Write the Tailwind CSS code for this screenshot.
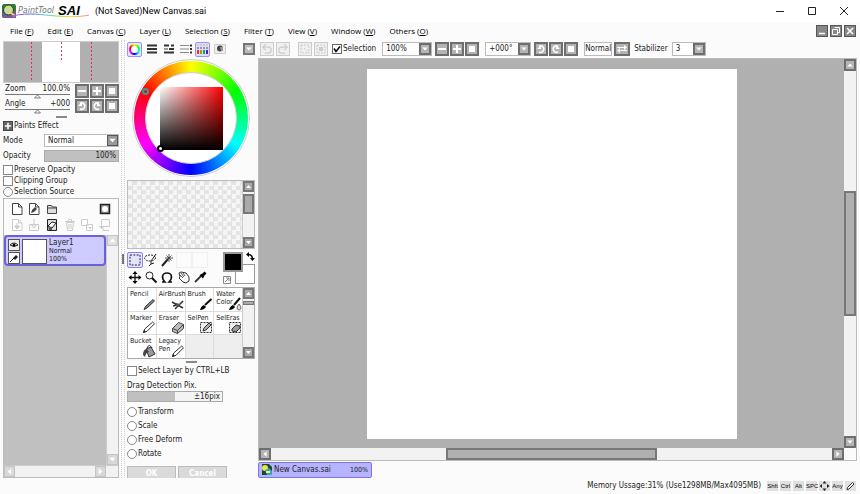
<!DOCTYPE html>
<html lang="en">
<head>
    <meta charset="UTF-8">
    <meta name="viewport" content="width=device-width, initial-scale=1.0">
    <title>(Not Saved)New Canvas.sai</title>
    <script src="https://cdn.jsdelivr.net/npm/@tailwindcss/browser@4"></script>
</head>
<body class="flex flex-col h-screen overflow-hidden bg-[#fbfbfb] text-[#222] text-[8px] leading-[10px] font-['DejaVu_Sans_Condensed','DejaVu_Sans',sans-serif]">

    <!-- Shared glyphs, all on a 10x10 grid unless noted -->
    <svg class="hidden">
        <symbol id="minus" viewBox="0 0 10 10"><path d="M1 5h8" stroke="currentColor" stroke-width="2"/></symbol>
        <symbol id="plus" viewBox="0 0 10 10"><path d="M1 5h8M5 1v8" stroke="currentColor" stroke-width="2"/></symbol>
        <symbol id="square" viewBox="0 0 10 10"><path d="M2 2h6v6H2z" fill="currentColor"/></symbol>
        <symbol id="ccw" viewBox="0 0 10 10"><path d="M3 2.2A3.3 3.3 0 1 1 3 8" fill="none" stroke="currentColor" stroke-width="1.6"/><path d="M1 5h4V1z" fill="currentColor"/></symbol>
        <symbol id="cw" viewBox="0 0 10 10"><path d="M7 2.2A3.3 3.3 0 1 0 7 8" fill="none" stroke="currentColor" stroke-width="1.6"/><path d="M9 5H5V1z" fill="currentColor"/></symbol>
        <symbol id="up" viewBox="0 0 10 10"><path d="M1.5 7L5 3l3.500 4z" fill="currentColor"/></symbol>
        <symbol id="down" viewBox="0 0 10 10"><path d="M1.500 3L5 7l3.500-4z" fill="currentColor"/></symbol>
        <symbol id="left" viewBox="0 0 10 10"><path d="M7 1.500L3 5l4 3.500z" fill="currentColor"/></symbol>
        <symbol id="right" viewBox="0 0 10 10"><path d="M3 1.500L7 5 3 8.500z" fill="currentColor"/></symbol>
        <symbol id="undo" viewBox="0 0 10 10"><path d="M3 8.500h3a2.500 2.500 0 0 0 0-5H2M4 1L1.500 3.500 4 6" fill="none" stroke="currentColor"/></symbol>
        <symbol id="redo" viewBox="0 0 10 10"><path d="M7 8.500H4a2.500 2.500 0 0 1 0-5h4M6 1l2.500 2.500L6 6" fill="none" stroke="currentColor"/></symbol>
        <symbol id="swap" viewBox="0 0 10 10"><path d="M0 3.500h8M10 6.500H2" stroke="currentColor"/><path d="M7 1l3 2.500L7 6zM3 4L0 6.500 3 9z" fill="currentColor"/></symbol>
        <symbol id="pen" viewBox="0 0 14 14"><path d="M1.500 12.500l1.200-3.500 8-7 1.800 1.800-7.500 7.500z" fill="#fff" stroke="#333"/><path d="M1 13l1-3 2 2z" fill="#222"/></symbol>
        <symbol id="sheet" viewBox="0 0 14 14"><path d="M2.500 1.500h6l3.500 3.500v7.500H2.500zM8.500 1.500V5H12" fill="#fff" stroke="currentColor"/></symbol>
    </svg>

    <!-- Title bar -->
    <header class="flex shrink-0 items-center h-[22px] bg-white text-black text-[9px] font-[Roboto,sans-serif]">
        <div class="relative flex items-center w-[90px] h-full">
            <svg class="ml-0.5 size-3.5" viewBox="0 0 14 14">
                <rect width="14" height="14" rx="2" fill="#387a35"/>
                <path d="M0 9l6 1 8-3v7H1z" fill="#7c55a4"/>
                <circle cx="6.500" cy="6" r="5" fill="#cbd99a" stroke="#1c421c"/>
                <path d="M8 8l5 4" stroke="#e8d84a" stroke-width="2"/>
            </svg>
            <span class="ml-0.5 text-[8px] italic text-[#777] font-['DejaVu_Sans',sans-serif]">PaintTool</span>
            <b class="ml-1 text-[13px] italic font-['Liberation_Sans',sans-serif]">SAI</b>
            <svg class="absolute left-3 top-3 w-[78px] h-[6px]" viewBox="0 0 78 6" fill="none">
                <defs>
                    <linearGradient id="rainbow">
                        <stop offset="0" stop-color="#a05ae0"/><stop offset=".25" stop-color="#5a6cf0"/>
                        <stop offset=".45" stop-color="#4bd0d8"/><stop offset=".6" stop-color="#8be04c"/>
                        <stop offset=".75" stop-color="#ffd23c"/><stop offset="1" stop-color="#ff7b8c"/>
                    </linearGradient>
                </defs>
                <path d="M0 4C18 0 30 3 44 4S68 5 77 3" stroke="url(#rainbow)"/>
            </svg>
        </div>
        <h1 class="ml-[5px]">(Not Saved)New Canvas.sai</h1>
        <div class="flex ml-auto">
            <button class="flex justify-center w-8" aria-label="Minimize"><svg class="size-2" viewBox="0 0 8 8"><path d="M0 4.500h8" stroke="#222"/></svg></button>
            <button class="flex justify-center w-8" aria-label="Maximize"><svg class="size-2" viewBox="0 0 8 8"><path d="M.5.5h7v7h-7z" fill="none" stroke="#222"/></svg></button>
            <button class="flex justify-center w-8" aria-label="Close"><svg class="size-2" viewBox="0 0 8 8"><path d="M0 0l8 8M8 0L0 8" stroke="#222"/></svg></button>
        </div>
    </header>

    <!-- Menu bar -->
    <nav class="flex shrink-0 items-center h-[18px] pl-2.5 pr-1 text-[8px] font-['Open_Sans',sans-serif] text-black">
        <div class="flex gap-3.5">
            <a href="#">File (<u>F</u>)</a>
            <a href="#">Edit (<u>E</u>)</a>
            <a href="#">Canvas (<u>C</u>)</a>
            <a href="#">Layer (<u>L</u>)</a>
            <a href="#">Selection (<u>S</u>)</a>
            <a href="#">Filter (<u>T</u>)</a>
            <a href="#">View (<u>V</u>)</a>
            <a href="#">Window (<u>W</u>)</a>
            <a href="#">Others (<u>O</u>)</a>
        </div>
        <div class="flex gap-0.5 ml-auto text-white">
            <button class="size-3 border border-[#555] bg-[#888]" aria-label="Minimize canvas"><svg viewBox="0 0 10 10"><path d="M2 7.500h6" stroke="currentColor" stroke-width="1.500"/></svg></button>
            <button class="size-3 border border-[#555] bg-[#888]" aria-label="Restore canvas"><svg viewBox="0 0 10 10"><path d="M3.500 1.500h5v5h-2M1.500 3.500h5v5h-5z" fill="none" stroke="currentColor"/></svg></button>
            <button class="size-3 border border-[#555] bg-[#888]" aria-label="Close canvas"><svg viewBox="0 0 10 10"><path d="M2 2l6 6M8 2L2 8" stroke="currentColor" stroke-width="1.500"/></svg></button>
        </div>
    </nav>

    <main class="flex flex-1 min-h-0">

        <!-- Navigator and layers -->
        <aside class="flex flex-col shrink-0 w-[122px] pl-[3px] pr-0.5 border-r border-dotted border-[#ccc]">
            <div class="flex justify-center shrink-0 h-[42px] mt-px border border-[#ccc] bg-[#b0b0b0]">
                <div class="flex-1 flex justify-center pl-4"><i class="w-px bg-[repeating-linear-gradient(#f02860_0_2px,transparent_2px_4px)]"></i></div>
                <div class="w-[38px] h-full flex justify-center bg-white"><i class="w-px h-5 bg-[repeating-linear-gradient(#f02860_0_2px,transparent_2px_4px)]"></i></div>
                <div class="flex-1 flex justify-center pr-4"><i class="w-px bg-[repeating-linear-gradient(#f02860_0_2px,transparent_2px_4px)]"></i></div>
            </div>

            <div class="flex shrink-0 gap-px mt-px">
                <div class="flex-1 pl-0.5 pr-1">
                    <div class="flex justify-between"><span>Zoom</span><span>100.0%</span></div>
                    <svg class="block w-full h-1 overflow-visible" viewBox="0 0 66 4"><path d="M0 .5h66" stroke="#777"/><path d="M30 4l3-3 3 3z" fill="#fff" stroke="#777"/></svg>
                </div>
                <button class="size-3.5 border-2 border-[#6e6e6e] bg-[#b4b4b4] text-white" aria-label="Zoom out"><svg class="block size-2.5"><use href="#minus"/></svg></button>
                <button class="size-3.5 border-2 border-[#6e6e6e] bg-[#b4b4b4] text-white" aria-label="Zoom in"><svg class="block size-2.5"><use href="#plus"/></svg></button>
                <button class="size-3.5 border-2 border-[#6e6e6e] bg-[#b4b4b4] text-white" aria-label="Reset zoom"><svg class="block size-2.5"><use href="#square"/></svg></button>
            </div>
            <div class="flex shrink-0 gap-px mt-px">
                <div class="flex-1 pl-0.5 pr-1">
                    <div class="flex justify-between"><span>Angle</span><span>+000</span></div>
                    <svg class="block w-full h-1 overflow-visible" viewBox="0 0 66 4"><path d="M0 .5h66" stroke="#777"/><path d="M30 4l3-3 3 3z" fill="#fff" stroke="#777"/></svg>
                </div>
                <button class="size-3.5 border-2 border-[#6e6e6e] bg-[#b4b4b4] text-white" aria-label="Rotate left"><svg class="block size-2.5"><use href="#ccw"/></svg></button>
                <button class="size-3.5 border-2 border-[#6e6e6e] bg-[#b4b4b4] text-white" aria-label="Rotate right"><svg class="block size-2.5"><use href="#cw"/></svg></button>
                <button class="size-3.5 border-2 border-[#6e6e6e] bg-[#b4b4b4] text-white" aria-label="Reset angle"><svg class="block size-2.5"><use href="#square"/></svg></button>
            </div>

            <div class="shrink-0 self-center w-[11px] h-0.5 mt-[3px] bg-[#888]"></div>

            <div class="flex shrink-0 items-center gap-px mt-[3px] h-[10px]">
                <button class="size-[10px] border border-[#444] bg-[#666] text-white" aria-label="Expand paints effect"><svg class="size-2"><use href="#plus"/></svg></button>
                <span>Paints Effect</span>
            </div>
            <div class="flex shrink-0 items-center justify-between mt-[3px] h-[13px]">
                <label for="mode">Mode</label>
                <div class="relative w-[75px] h-[13px] border border-[#bbb] bg-white">
                    <select id="mode" class="block w-full h-full pl-[3px] appearance-none"><option>Normal</option></select>
                    <svg class="absolute right-0 top-0 size-[11px] border border-[#555] bg-[#999] text-white pointer-events-none"><use href="#down"/></svg>
                </div>
            </div>
            <div class="flex shrink-0 items-center justify-between mt-[3px] h-3">
                <span>Opacity</span>
                <div class="w-[75px] h-3 pr-0.5 border border-[#aaa] bg-[#c0c0c0] text-right">100%</div>
            </div>
            <div class="flex flex-col shrink-0 gap-px mt-[3px]">
                <label class="flex items-center gap-px h-[10px]"><input type="checkbox" class="size-[10px] appearance-none border border-[#888] bg-white">Preserve Opacity</label>
                <label class="flex items-center gap-px h-[10px]"><input type="checkbox" class="size-[10px] appearance-none border border-[#888] bg-white">Clipping Group</label>
                <label class="flex items-center gap-px h-[10px]"><input type="radio" class="size-[10px] appearance-none rounded-full border border-[#888] bg-white">Selection Source</label>
            </div>

            <!-- Layer list -->
            <section class="flex flex-col flex-1 min-h-0 mt-px border border-[#bbb]">
                <div class="grid grid-cols-6 gap-y-px shrink-0 h-[36px] py-0.5 px-1 place-items-center text-[#444]">
                    <button aria-label="New layer"><svg class="size-3.5"><use href="#sheet"/></svg></button>
                    <button aria-label="New linework layer"><svg class="size-3.5" viewBox="0 0 14 14"><use href="#sheet"/><path d="M4 11l1-3 3-3 2 2-3 3z" fill="#444"/></svg></button>
                    <button aria-label="New layer set"><svg class="size-3.5" viewBox="0 0 14 14"><path d="M2.500 11.500v-8h4l1 1.500h4v6.500zM2.500 6h9" fill="#ddd" stroke="#444"/></svg></button>
                    <button class="col-start-6" aria-label="New mask"><svg class="size-3.5" viewBox="0 0 14 14"><path d="M2.500 2.500h9v9h-9z" fill="#999" stroke="#222" stroke-width="1.500"/><circle cx="7" cy="7" r="3" fill="#fff"/></svg></button>
                    <button class="text-[#ccc]" aria-label="Transfer down"><svg class="size-3.5" viewBox="0 0 14 14"><use href="#sheet"/><path d="M7 5v3M4.500 8h5L7 11z" fill="#ccc" stroke="#ccc"/></svg></button>
                    <button class="text-[#ccc]" aria-label="Merge down"><svg class="size-3.5" viewBox="0 0 14 14"><path d="M2.500 6.500h9v6h-9zM7 1v5M4.500 7h5L7 10z" fill="none" stroke="#ccc"/></svg></button>
                    <button aria-label="Clear layer"><svg class="size-3.5" viewBox="0 0 14 14"><path d="M2.500 1.500h9v11h-9z" fill="#ddd" stroke="#222"/><path d="M3 8l4-4 4 1-4 5z" fill="#fff" stroke="#222"/><path d="M3 9l4 1v2H4z" fill="#555"/></svg></button>
                    <button aria-label="Delete layer"><svg class="size-3.5" viewBox="0 0 14 14"><path d="M3.500 4.500h7l-1 8h-5zM2 3.500h10M5.500 3V1.500h3V3M6 6v5M8 6v5" fill="none" stroke="#ccc"/></svg></button>
                    <button aria-label="Apply mask"><svg class="size-3.5" viewBox="0 0 14 14"><path d="M1.500 1.500h6v6h-6zM6.500 6.500h6v6h-6z" fill="#fff" stroke="#ccc"/><path d="M8 9h4l-2 2.500z" fill="#ccc"/></svg></button>
                    <button aria-label="Link mask"><svg class="size-3.5" viewBox="0 0 14 14"><path d="M3.500 1.500h8v7h-8zM5 9v3.500h6" fill="none" stroke="#ccc"/><path d="M1 8h5l-2.500 3z" fill="#ccc"/></svg></button>
                </div>
                <div class="flex flex-1 min-h-0">
                    <div class="flex-1 bg-[#c0c0c0]">
                        <div class="flex h-[31px] p-0.5 rounded-sm border-2 border-[#6a60d8] bg-[#cdcbff] leading-[8px]">
                            <div class="flex flex-col gap-px shrink-0 w-[12px]">
                                <button class="size-3 border border-[#555] bg-[#eee]" aria-label="Visible"><svg viewBox="0 0 10 10"><path d="M1 5q4-4 8 0-4 3-8 0z" fill="#fff" stroke="#222"/><circle cx="5" cy="5" r="1.500"/></svg></button>
                                <button class="size-3 border border-[#555] bg-white" aria-label="Edit target"><svg viewBox="0 0 10 10"><path d="M1 9l4-4" stroke="#222"/><path d="M4 5l3-3 2 2-3 3z" fill="#222"/></svg></button>
                            </div>
                            <div class="shrink-0 w-[25px] h-[25px] ml-0.5 border border-[#555] bg-white"></div>
                            <div class="pl-0.5">
                                <p>Layer1</p>
                                <p class="text-[7px]">Normal</p>
                                <p class="text-[7px]">100%</p>
                            </div>
                        </div>
                    </div>
                    <div class="flex flex-col justify-between w-3 border-l border-[#ccc] bg-[#f2f2f2] text-white">
                        <button class="size-[11px] border border-[#c4c4c4] bg-[#e0e0e0]" aria-label="Scroll up"><svg class="size-[9px]"><use href="#up"/></svg></button>
                        <button class="size-[11px] border border-[#c4c4c4] bg-[#d8d8d8]" aria-label="Scroll down"><svg class="size-[9px]"><use href="#down"/></svg></button>
                    </div>
                </div>
                <div class="flex justify-between shrink-0 h-3 pr-3 border-t border-[#ccc] bg-[#f2f2f2] text-white">
                    <button class="size-[11px] border border-[#c4c4c4] bg-[#d8d8d8]" aria-label="Scroll left"><svg class="size-[9px]"><use href="#left"/></svg></button>
                    <button class="size-[11px] border border-[#c4c4c4] bg-[#d8d8d8]" aria-label="Scroll right"><svg class="size-[9px]"><use href="#right"/></svg></button>
                </div>
            </section>
        </aside>

        <!-- Panel splitter -->
        <div class="flex items-center shrink-0 w-0.5"><i class="w-0.5 h-2.5 bg-[#777]"></i></div>

        <!-- Color and tools -->
        <aside class="flex flex-col shrink-0 w-[134px] pl-0.5 pr-[3px] border-l border-dotted border-[#ccc] overflow-hidden">
            <div class="flex shrink-0 items-center gap-0.5 h-[18px]">
                <button class="size-[15px] rounded-xs border border-[#9a94f0] bg-[#e4e4ff] flex items-center justify-center" aria-label="Color wheel">
                    <i class="flex items-center justify-center size-[11px] rounded-full bg-[conic-gradient(#ff0,#0f0,#0ff,#00f,#f0f,#f00,#ff0)]"><i class="size-[7px] rounded-full bg-white"></i></i>
                </button>
                <button class="size-[15px] flex items-center justify-center" aria-label="RGB slider"><svg class="size-3" viewBox="0 0 12 12"><path d="M1 2.500h10M1 6h10M1 9.500h10" stroke="#333" stroke-width="2"/></svg></button>
                <button class="size-[15px] flex items-center justify-center" aria-label="HSV slider"><svg class="size-3" viewBox="0 0 12 12"><path d="M1 2.500h5M8 2.500h3M6 6h5M1 9.500h10" stroke="#333" stroke-width="2"/><path d="M1 6h4" stroke="#999" stroke-width="2"/></svg></button>
                <button class="size-[15px] flex items-center justify-center" aria-label="Color mixer"><svg class="size-3" viewBox="0 0 12 12"><path d="M0 2.500h9M0 6h9M0 9.500h9" stroke="#888"/><path d="M10 2.500h2M10 6h2M10 9.500h2" stroke="#333" stroke-width="2"/></svg></button>
                <button class="size-[15px] rounded-xs border border-[#9a94f0] bg-[#dedcff] flex items-center justify-center" aria-label="Swatches">
                    <svg class="size-3" viewBox="0 0 12 12"><g fill="none" stroke-width="2" stroke-dasharray="2 1"><path d="M0 2h12" stroke="#ccc"/><path d="M0 5h12" stroke="#999"/></g><path d="M0 7h2v4H0z" fill="#d33"/><path d="M3 7h2v4H3z" fill="#a90"/><path d="M6 7h2v4H6z" fill="#1a5"/><path d="M9 7h2v4H9z" fill="#42c"/></svg>
                </button>
                <button class="size-[15px] flex items-center justify-center" aria-label="Scratchpad"><svg class="size-3" viewBox="0 0 12 12"><path d="M.5 1.500h11v9H.5z" fill="#eee" stroke="#ccc"/><circle cx="6" cy="5.500" r="3" fill="#444"/><path d="M6 4h3v4H7z" fill="#999"/></svg></button>
                <button class="size-3 ml-auto border-2 border-[#777] bg-[#bbb] text-white" aria-label="Collapse"><svg class="size-2"><use href="#down"/></svg></button>
            </div>

            <!-- Hue ring with saturation/value square -->
            <div class="relative shrink-0 self-center flex items-center justify-center size-[118px] mt-px rounded-full border border-[#ccc] bg-white">
                <div class="flex items-center justify-center size-[114px] rounded-full bg-[conic-gradient(#ff0,#0f0,#0ff,#00f,#f0f,#f00,#ff0)]">
                    <div class="flex items-center justify-center size-[92px] rounded-full border border-[#ccc] bg-white">
                        <div class="size-[63px] bg-[linear-gradient(to_top,#000,transparent),linear-gradient(to_right,#fff,#f00)]"></div>
                    </div>
                </div>
                <i class="absolute left-[9px] top-[28px] size-[7px] rounded-full border-2 border-[#2aa0a0]"></i>
                <i class="absolute left-6 top-[85px] size-[7px] rounded-full border-2 border-black bg-white"></i>
            </div>

            <!-- Swatch grid -->
            <div class="flex shrink-0 h-[69px] mt-[3px] border border-[#bbb]">
                <div class="flex-1 bg-[repeating-conic-gradient(#e4e4e4_0_25%,#f6f6f6_0_50%)] bg-size-[9px_9px]"></div>
                <div class="flex flex-col w-3 border-l border-[#ccc] bg-[#f2f2f2] text-white">
                    <button class="size-[11px] border-2 border-[#777] bg-[#aaa]" aria-label="Scroll up"><svg class="size-[7px]"><use href="#up"/></svg></button>
                    <div class="h-5 mt-0.5 border-2 border-[#777] bg-[#aaa]"></div>
                    <button class="size-[11px] mt-auto border-2 border-[#777] bg-[#aaa]" aria-label="Scroll down"><svg class="size-[7px]"><use href="#down"/></svg></button>
                </div>
            </div>

            <!-- Selection tools and current colors -->
            <div class="flex shrink-0 justify-between mt-[3px] h-[34px]">
                <div class="grid grid-cols-5 w-20 gap-x-px">
                    <button class="size-4 flex items-center justify-center rounded-xs border border-[#8a84f0] bg-[#e4e4ff]" aria-label="Select"><svg class="size-3" viewBox="0 0 12 12"><path d="M1 1h10v10H1z" fill="none" stroke="#223" stroke-dasharray="2 1.300"/></svg></button>
                    <button class="size-4" aria-label="Lasso"><svg viewBox="0 0 16 16"><ellipse cx="7" cy="6" rx="5.500" ry="3" fill="none" stroke="#222" stroke-dasharray="2 1"/><path d="M13 2L8 9v3l3-1M8 12l-2 2" fill="none" stroke="#222"/></svg></button>
                    <button class="size-4" aria-label="Magic wand"><svg viewBox="0 0 16 16"><path d="M3 14l6-7" stroke="#222" stroke-width="2"/><path d="M10 2v8M6 6h8M7.500 3.500l5 5M12.500 3.500l-5 5" stroke="#333" stroke-width=".8"/></svg></button>
                    <span class="size-4 border border-[#f0f0f0]"></span>
                    <span class="size-4 border border-[#f0f0f0]"></span>
                    <button class="size-4" aria-label="Move"><svg viewBox="0 0 16 16"><path d="M8 4v9M3 8.500h10" stroke="#111" stroke-width="1.300"/><path d="M8 2l2.500 3h-5zM8 15l2.500-3h-5zM1.500 8.500l3-2.500v5zM14.500 8.500l-3-2.500v5z"/></svg></button>
                    <button class="size-4" aria-label="Zoom"><svg viewBox="0 0 16 16"><circle cx="6.500" cy="6.500" r="3.500" fill="none" stroke="#222"/><path d="M9 9l4.500 4.500" stroke="#111" stroke-width="2"/></svg></button>
                    <button class="size-4" aria-label="Rotate"><svg viewBox="0 0 16 16"><path d="M3 13h3c-4-4-3-9 2-9s6 5 2 9h3" fill="none" stroke="#111" stroke-width="1.600"/></svg></button>
                    <button class="size-4" aria-label="Hand"><svg viewBox="0 0 16 16"><path d="M3 4l2-1 5 1 3 4v4l-3 2-3-1-4-4 1-1z" fill="#fff" stroke="#333"/><path d="M5 4l3 4M7 4l2 3M4 6l3 3" stroke="#333" stroke-width=".8"/></svg></button>
                    <button class="size-4" aria-label="Eyedropper"><svg viewBox="0 0 16 16"><path d="M3 13l6-6" stroke="#333" stroke-width="1.800"/><path d="M7.500 6l3-1.500 2-2 2 2-2 2L11 9.500z"/></svg></button>
                </div>
                <div class="relative w-8 h-8">
                    <button class="absolute right-0 bottom-0 size-5 border border-[#999] bg-white" aria-label="Secondary color"></button>
                    <button class="absolute left-0 top-0 size-5 border-2 border-[#999] bg-black" aria-label="Primary color"></button>
                    <svg class="absolute right-0 top-0 size-[9px]" viewBox="0 0 9 9"><path d="M2 2.500q4 0 4.500 4" fill="none" stroke="#111" stroke-width="1.500"/><path d="M0 2.500L3 0v5zM4 6h5L6.500 9z"/></svg>
                    <svg class="absolute left-0 bottom-0 size-2" viewBox="0 0 8 8"><path d="M.5.5h7v7h-7zM2 6l4-4M3 2h3v3" fill="#fff" stroke="#888"/></svg>
                </div>
            </div>

            <!-- Brushes -->
            <div class="flex shrink-0 h-[72px] mt-px border border-[#aaa]">
                <div class="flex-1 grid grid-cols-4 grid-rows-3 gap-px bg-[#ddd] leading-[8px] text-[7px]">
                    <button class="relative flex items-start pl-0.5 pt-0.5 bg-white text-left">Pencil<svg class="absolute right-0 bottom-0 size-3.5" viewBox="0 0 14 14"><path d="M2 12.500l1.500-3 7.500-7 1.500 1.500-7.500 7z" fill="#888" stroke="#333"/></svg></button>
                    <button class="relative flex items-start pl-0.5 pt-0.5 bg-white text-left">AirBrush<svg class="absolute right-0 bottom-0 size-3.5" viewBox="0 0 14 14"><path d="M1 5l11 6M4 12l8-8M2 9l4-1" stroke="#333" stroke-width="1.500" fill="none"/><path d="M5 6l4 1-1 3-3-1z" fill="#555"/></svg></button>
                    <button class="relative flex items-start pl-0.5 pt-0.5 bg-white text-left">Brush<svg class="absolute right-0 bottom-0 size-3.5" viewBox="0 0 14 14"><path d="M12.500 2L6 8" stroke="#111" stroke-width="2"/><path d="M1 13q1-4 4-5l2 2q-2 3-6 3z"/></svg></button>
                    <button class="relative flex items-start pl-0.5 pt-0.5 bg-white text-left">Water Color<svg class="absolute right-0 bottom-0 size-3.5" viewBox="0 0 14 14"><path d="M12 1L6 8" stroke="#111" stroke-width="2"/><path d="M1 13q1-4 4-5l2 2q-2 3-6 3z"/><path d="M11 7q4 5 0 6-4-1 0-6z" fill="#ddd" stroke="#666"/></svg></button>
                    <button class="relative flex items-start pl-0.5 pt-0.5 bg-white text-left">Marker<svg class="absolute right-0 bottom-0 size-3.5"><use href="#pen"/></svg></button>
                    <button class="relative flex items-start pl-0.5 pt-0.5 bg-white text-left">Eraser<svg class="absolute right-0 bottom-0 size-3.5" viewBox="0 0 14 14"><path d="M1.500 8.500l6-6 5 2v4l-6 5-5-2z" fill="#bbb" stroke="#444"/><path d="M1.500 8.500l5 2v3M6.500 10.500l6-6" fill="none" stroke="#444"/></svg></button>
                    <button class="relative flex items-start pl-0.5 pt-0.5 bg-white text-left">SelPen<svg class="absolute right-0 bottom-0 size-3.5" viewBox="0 0 14 14"><path d="M1.500 2.500h11v10h-11z" fill="#eee" stroke="#333" stroke-dasharray="2 1"/><path d="M4 11l1-3 5-5 2 2-5 5z" fill="#aaa" stroke="#333"/></svg></button>
                    <button class="relative flex items-start pl-0.5 pt-0.5 bg-white text-left">SelEras<svg class="absolute right-0 bottom-0 size-3.5" viewBox="0 0 14 14"><path d="M1.500 2.500h11v10h-11z" fill="#eee" stroke="#333" stroke-dasharray="2 1"/><path d="M4 9l4-4 4 1v2l-4 4-4-1z" fill="#999" stroke="#333"/></svg></button>
                    <button class="relative flex items-start pl-0.5 pt-0.5 bg-white text-left">Bucket<svg class="absolute right-0 bottom-0 size-3.5" viewBox="0 0 14 14"><path d="M4 5l5-2 4 7-6 3z" fill="#999" stroke="#333"/><path d="M1 11q0-6 4-6l2 3q-3 0-4 5z" fill="#444"/><path d="M5 4q2-5 5 0" fill="none" stroke="#333"/></svg></button>
                    <button class="relative flex items-start pl-0.5 pt-0.5 bg-white text-left">Legacy Pen<svg class="absolute right-0 bottom-0 size-3.5"><use href="#pen"/></svg></button>
                    <span class="bg-[#eee]"></span>
                    <span class="bg-[#eee]"></span>
                </div>
                <div class="flex flex-col w-3 border-l border-[#ccc] bg-[#f2f2f2] text-white">
                    <button class="size-[11px] border-2 border-[#777] bg-[#aaa]" aria-label="Scroll up"><svg class="size-[7px]"><use href="#up"/></svg></button>
                    <div class="h-1 mt-0.5 border border-[#777] bg-[#aaa]"></div>
                    <button class="size-[11px] mt-auto border-2 border-[#777] bg-[#aaa]" aria-label="Scroll down"><svg class="size-[7px]"><use href="#down"/></svg></button>
                </div>
            </div>

            <div class="shrink-0 self-center w-[11px] h-0.5 mt-0.5 bg-[#888]"></div>

            <!-- Tool options -->
            <label class="flex shrink-0 items-center gap-px h-[10px] mt-[3px]"><input type="checkbox" class="size-[10px] appearance-none border border-[#888] bg-white">Select Layer by CTRL+LB</label>
            <p class="shrink-0 mt-[5px]">Drag Detection Pix.</p>
            <div class="flex shrink-0 items-center justify-end w-24 h-[11px] pr-0.5 border border-[#aaa] bg-[linear-gradient(to_right,#c0c0c0_50%,#f4f4f4_50%)]">±16pix</div>
            <div class="flex flex-col shrink-0 gap-1 mt-[5px]">
                <label class="flex items-center gap-px h-[10px]"><input type="radio" name="op" class="size-[10px] appearance-none rounded-full border border-[#888] bg-white">Transform</label>
                <label class="flex items-center gap-px h-[10px]"><input type="radio" name="op" class="size-[10px] appearance-none rounded-full border border-[#888] bg-white">Scale</label>
                <label class="flex items-center gap-px h-[10px]"><input type="radio" name="op" class="size-[10px] appearance-none rounded-full border border-[#888] bg-white">Free Deform</label>
                <label class="flex items-center gap-px h-[10px]"><input type="radio" name="op" class="size-[10px] appearance-none rounded-full border border-[#888] bg-white">Rotate</label>
            </div>
            <div class="flex gap-0.5 mt-[7px] text-white font-bold">
                <button class="w-[49px] h-4 border border-[#bbb] bg-[#dadada]" disabled>OK</button>
                <button class="w-[49px] h-4 border border-[#bbb] bg-[#dadada]" disabled>Cancel</button>
            </div>
        </aside>

        <!-- Canvas view -->
        <section class="flex flex-col flex-1 min-w-0 pr-[3px]">
            <div class="flex shrink-0 items-center h-[18px] pl-0.5 text-white">
                <button class="size-3.5 border border-[#ccc] bg-[#f0f0f0] text-[#ccc]" aria-label="Undo" disabled><svg class="size-3"><use href="#undo"/></svg></button>
                <button class="size-3.5 ml-0.5 border border-[#ccc] bg-[#f0f0f0] text-[#ccc]" aria-label="Redo" disabled><svg class="size-3"><use href="#redo"/></svg></button>
                <button class="size-3.5 ml-2 border border-[#ccc] bg-[#f0f0f0] text-[#ccc]" aria-label="Deselect" disabled><svg class="size-3" viewBox="0 0 12 12"><path d="M2 2h8v8H2zM5 5l5 5" fill="none" stroke="currentColor" stroke-dasharray="2 1"/></svg></button>
                <button class="size-3.5 ml-0.5 border border-[#ccc] bg-[#f0f0f0] text-[#ccc]" aria-label="Invert selection" disabled><svg class="size-3" viewBox="0 0 12 12"><path d="M2 2h8v8H2z" fill="none" stroke="currentColor" stroke-dasharray="2 1"/><path d="M4 4h4v4H4z" fill="currentColor"/></svg></button>
                <label class="flex items-center gap-px ml-1 text-[#222]">
                    <span class="relative size-[10px]">
                        <input type="checkbox" checked class="block size-[10px] appearance-none border border-[#666] bg-white">
                        <svg class="absolute left-0 top-0 size-[10px] pointer-events-none" viewBox="0 0 10 10"><path d="M2 4.500l2 3 4-5" fill="none" stroke="#000" stroke-width="1.500"/></svg>
                    </span>
                    Selection
                </label>
                <div class="relative w-[50px] h-3.5 ml-1.5 border border-[#bbb] bg-white text-[#222]">
                    <select class="block w-full h-full pl-[3px] appearance-none" aria-label="Zoom"><option>100%</option></select>
                    <svg class="absolute right-0 top-0 size-3 border-2 border-[#6e6e6e] bg-[#b4b4b4] text-white pointer-events-none"><use href="#down"/></svg>
                </div>
                <div class="flex gap-px ml-[3px]">
                    <button class="size-3.5 border-2 border-[#6e6e6e] bg-[#b4b4b4]" aria-label="Zoom out"><svg class="block size-2.5"><use href="#minus"/></svg></button>
                    <button class="size-3.5 border-2 border-[#6e6e6e] bg-[#b4b4b4]" aria-label="Zoom in"><svg class="block size-2.5"><use href="#plus"/></svg></button>
                    <button class="size-3.5 border-2 border-[#6e6e6e] bg-[#b4b4b4]" aria-label="Reset zoom"><svg class="block size-2.5"><use href="#square"/></svg></button>
                </div>
                <div class="relative w-[46px] h-3.5 ml-1.5 border border-[#bbb] bg-white text-[#222]">
                    <select class="block w-full h-full pl-[3px] appearance-none" aria-label="Angle"><option>+000°</option></select>
                    <svg class="absolute right-0 top-0 size-3 border-2 border-[#6e6e6e] bg-[#b4b4b4] text-white pointer-events-none"><use href="#down"/></svg>
                </div>
                <div class="flex gap-px ml-[3px]">
                    <button class="size-3.5 border-2 border-[#6e6e6e] bg-[#b4b4b4]" aria-label="Rotate left"><svg class="block size-2.5"><use href="#ccw"/></svg></button>
                    <button class="size-3.5 border-2 border-[#6e6e6e] bg-[#b4b4b4]" aria-label="Rotate right"><svg class="block size-2.5"><use href="#cw"/></svg></button>
                    <button class="size-3.5 border-2 border-[#6e6e6e] bg-[#b4b4b4]" aria-label="Reset angle"><svg class="block size-2.5"><use href="#square"/></svg></button>
                </div>
                <button class="w-7 h-3.5 ml-1.5 border border-[#bbb] bg-white text-[#222]">Normal</button>
                <button class="w-4 h-3.5 ml-0.5 border-2 border-[#6e6e6e] bg-[#b4b4b4]" aria-label="Flip"><svg class="block w-3 h-2.5"><use href="#swap"/></svg></button>
                <label for="stabilizer" class="ml-1 text-[#222]">Stabilizer</label>
                <div class="relative w-[34px] h-3.5 ml-1 border border-[#bbb] bg-white text-[#222]">
                    <select id="stabilizer" class="block w-full h-full pl-[3px] appearance-none"><option>3</option></select>
                    <svg class="absolute right-0 top-0 size-3 border-2 border-[#6e6e6e] bg-[#b4b4b4] text-white pointer-events-none"><use href="#down"/></svg>
                </div>
            </div>

            <div class="flex flex-col flex-1 min-h-0 border border-[#bbb]">
                <div class="flex flex-1 min-h-0">
                    <div class="flex flex-1 items-center justify-center bg-[#b0b0b0] overflow-hidden">
                        <div class="shrink-0 size-[370px] bg-white"></div>
                    </div>
                    <div class="flex flex-col w-3 bg-[#f2f2f2] text-white">
                        <button class="h-3 border-2 border-[#6e6e6e] bg-[#b4b4b4]" aria-label="Scroll up"><svg class="block size-2"><use href="#up"/></svg></button>
                        <div class="flex-1"></div>
                        <div class="h-[32%] border-2 border-[#777] bg-[#b0b0b0]"></div>
                        <div class="flex-1"></div>
                        <button class="h-3 border-2 border-[#6e6e6e] bg-[#b4b4b4]" aria-label="Scroll down"><svg class="block size-2"><use href="#down"/></svg></button>
                    </div>
                </div>
                <div class="flex shrink-0 h-3 mr-3 bg-[#f2f2f2] text-white">
                    <button class="w-3 border-2 border-[#6e6e6e] bg-[#b4b4b4]" aria-label="Scroll left"><svg class="block size-2"><use href="#left"/></svg></button>
                    <div class="flex-1"></div>
                    <div class="w-[36%] border-2 border-[#777] bg-[#b0b0b0]"></div>
                    <div class="flex-1"></div>
                    <button class="w-3 border-2 border-[#6e6e6e] bg-[#b4b4b4]" aria-label="Scroll right"><svg class="block size-2"><use href="#right"/></svg></button>
                </div>
            </div>

            <div class="shrink-0 h-[17px] pt-px">
                <button class="flex items-center w-[114px] h-4 px-0.5 rounded-xs border border-[#7c74e8] bg-[#b6b3ff]">
                    <svg class="size-3" viewBox="0 0 12 12"><path d="M1 0h7l3 3v8H1z" fill="#174a33"/><circle cx="4" cy="4" r="3" fill="#f2e24a"/><path d="M4 6l4-2 3 3v4H6z" fill="#39a0c8"/><path d="M5 7h4v2H5z" fill="#ef6"/></svg>
                    <span class="ml-px">New Canvas.sai</span>
                    <span class="ml-auto pr-px text-[7px]">100%</span>
                </button>
            </div>
        </section>
    </main>

    <!-- Status bar -->
    <footer class="flex shrink-0 items-center justify-end h-4 pr-1">
        <span>Memory Ussage:31% (Use1298MB/Max4095MB)</span>
        <div class="flex gap-0.5 ml-1.5 text-[6px] text-black">
            <kbd class="w-[11px] bg-[#e0e0e0] text-center font-['Liberation_Sans',sans-serif]">Shft</kbd>
            <kbd class="w-[11px] bg-[#e0e0e0] text-center font-['Liberation_Sans',sans-serif]">Ctrl</kbd>
            <kbd class="w-[11px] bg-[#e0e0e0] text-center font-['Liberation_Sans',sans-serif]">Alt</kbd>
            <kbd class="w-[11px] bg-[#e0e0e0] text-center font-['Liberation_Sans',sans-serif]">SPC</kbd>
            <svg class="w-[11px] h-[10px] bg-[#e0e0e0]" viewBox="0 0 10 10"><path d="M5 0l2 2.500H3zM5 10l2-2.500H3zM0 5l2.500-2v4zM10 5L7.500 3v4z" fill="#222"/></svg>
            <kbd class="w-[11px] bg-[#e0e0e0] text-center font-['Liberation_Sans',sans-serif]">Any</kbd>
            <svg class="w-[11px] h-[10px] bg-[#e0e0e0]" viewBox="0 0 10 10"><path d="M1.500 8.500l.5-2 5-5 1.500 1.500-5 5z" fill="#fff" stroke="#333"/></svg>
        </div>
    </footer>
</body>
</html>
